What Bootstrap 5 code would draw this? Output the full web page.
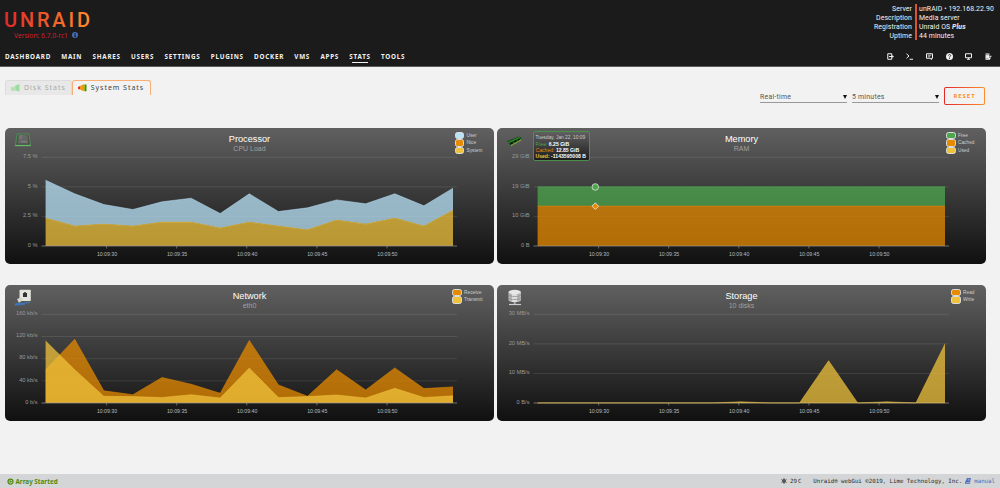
<!DOCTYPE html>
<html lang="en">
<head>
    <meta charset="UTF-8">
    <meta name="viewport" content="width=device-width, initial-scale=1.0">
    <title>Unraid - Stats</title>
    <link href="https://cdn.jsdelivr.net/npm/bootstrap@5.3.0/dist/css/bootstrap.min.css" rel="stylesheet">
    <style>
        body {
            background: #f2f2f2;
            font-family: "Noto Sans", sans-serif;
            font-size: 7px;
            line-height: 9px;
            color: #1c1b1b;
            height: 488px;
            overflow: hidden;
        }
        svg { display: block; overflow: visible; }

        /* header */
        .top-bar {
            background: #1c1b1b;
            color: #f2f2f2;
            height: 67px;
            border-bottom: 1px solid #5c5c5c;
        }
        .brand { width: 90px; padding: 9px 0 0 4px; }
        .brand-version { color: #d11f27; font-size: 6.7px; padding-left: 10px; margin-top: 1.5px; }
        .server-info { font-family: Roboto, sans-serif; font-size: 6.9px; letter-spacing: .1px; padding-top: 4px; height: 41px; }
        .server-info div div { position: relative; top: .6px; }
        .info-labels { padding-right: 3px; }
        .info-values { border-left: 2px solid #d9532c; padding-left: 2px; width: 85px; height: 36px; }
        .main-menu { padding: 0 8px 0 5px; height: 12px; margin-top: 9px; }
        .main-menu a {
            color: #f2f2f2;
            font-size: 6.3px;
            font-weight: 700;
            letter-spacing: .75px;
            margin-right: 10.3px;
            position: relative;
        }
        .main-menu a.current::after {
            content: "";
            position: absolute;
            left: 3px;
            right: 3px;
            bottom: -2px;
            height: 1px;
            background: #f2f2f2;
        }
        .tool-icons { gap: 12.7px; }
        .tool-icons svg { width: 7px; height: 7px; }

        /* tabs and selectors */
        .tab-row { height: 61px; padding: 13px 15px 0 5px; }
        .stat-tab {
            height: 14.5px;
            border: 1px solid #dcdcdc;
            border-bottom: 0;
            border-radius: 3px 3px 0 0;
            background: #e8e8e8;
            color: #a8a8a8;
            font-size: 7px;
            letter-spacing: .97px;
            padding: 0 5px;
        }
        .stat-tab.current { background: #f2f2f2; border-color: #f9ae74; color: #444; padding-right: 6px; }
        .stat-tab svg { width: 9px; height: 8px; margin-right: 4px; }
        .picker {
            font-family: Roboto, sans-serif;
            font-size: 6.9px;
            letter-spacing: .25px;
            color: #555;
            width: 87px;
            height: 13.5px;
            border-bottom: 1px solid #999;
            margin-right: 5px;
            margin-top: 9.5px;
            padding-top: 2.5px;
        }
        .picker i {
            border: 2px solid transparent;
            border-top: 4px solid #111;
            border-bottom: 0;
        }
        .reset-btn {
            width: 41px;
            height: 18px;
            margin-top: 7px;
            border: 0;
            border-radius: 2px;
            background: linear-gradient(90deg, #e22828, #ff8c2f);
            padding: 1.3px;
        }
        .reset-btn span {
            display: block;
            height: 100%;
            line-height: 17px;
            border-radius: 1px;
            background: #f2f2f2;
            color: #ff8c2f;
            font-size: 5.9px;
            font-weight: 700;
            letter-spacing: 1px;
        }

        /* charts */
        .chart-grid {
            display: grid;
            grid-template-columns: 489px 489px;
            column-gap: 3px;
            row-gap: 21px;
            padding-left: 5px;
            font-family: "Liberation Sans", sans-serif;
        }
        .chart-box {
            height: 136px;
            border-radius: 5px;
            background: linear-gradient(#606060, #101010);
            position: relative;
        }
        .chart-head { height: 24px; padding-right: 11.5px; }
        .chart-icon { width: 60px; padding: 4px 0 0 9px; }
        .chart-icon svg { width: 18px; height: 18px; }
        .chart-name { color: #fff; font-size: 9.2px; line-height: 10px; padding-top: 5.5px; }
        .chart-sub { color: #a0a0a0; font-size: 7px; line-height: 9px; }
        .chart-keys { width: 48.5px; padding-top: 4.4px; font-size: 4.8px; line-height: 7.1px; color: #ccc; }
        .key-list span { display: flex; align-items: center; }
        .key-list i {
            flex-shrink: 0;
            width: 9.6px;
            height: 7.1px;
            border: 1px solid #ddd;
            border-radius: 2.5px;
            margin-right: 2px;
        }
        .point-tip {
            position: absolute;
            left: 36px;
            top: 3px;
            width: 56.5px;
            height: 30px;
            border: 1px solid #4a8f4a;
            border-radius: 2px;
            background: linear-gradient(rgba(96, 96, 96, .8), rgba(16, 16, 16, .8));
            color: #fff;
            font-size: 5.1px;
            line-height: 6.25px;
            padding: 2.5px 1.5px;
            white-space: nowrap;
        }
        .tip-date { color: #ccc; font-size: 4.8px; }

        /* footer */
        .status-bar {
            position: absolute;
            left: 0;
            right: 0;
            bottom: 0;
            height: 14px;
            background: #d4d5d6;
            color: #2b2a29;
            padding: 0 5px 0 7px;
        }
        .array-state { color: #4f8a10; font-weight: 700; font-size: 6.3px; }
        .copyright { font-family: "DejaVu Sans Mono", monospace; font-size: 5.75px; }
        .copyright a { color: #486dba; }
    </style>
</head>
<body>

<header class="top-bar">
    <div class="d-flex justify-content-between">
        <div class="brand">
            <svg width="86" height="20">
                <defs>
                    <linearGradient id="brandFill" gradientUnits="userSpaceOnUse" x1="0" y1="0" x2="86" y2="0">
                        <stop offset="0" stop-color="#e22828"/>
                        <stop offset="1" stop-color="#ff8c2f"/>
                    </linearGradient>
                </defs>
                <text x="0" y="17.5" font-family="Roboto, sans-serif" font-size="20" font-weight="500" textLength="86" fill="url(#brandFill)">UNRAID</text>
            </svg>
            <div class="brand-version d-flex align-items-center text-nowrap">
                Version: 6.7.0-rc1
                <svg class="ms-1" width="6" height="6" viewBox="0 0 12 12"><circle cx="6" cy="6" r="6" fill="#486dba"/><path d="M5 2h2.4v2H5zM4 5h3.4v4H8.4v1.2H4V9h1V6.2H4z" fill="#1c1b1b"/></svg>
            </div>
        </div>
        <div class="server-info d-flex text-nowrap">
            <div class="info-labels text-end">
                <div>Server</div>
                <div>Description</div>
                <div>Registration</div>
                <div>Uptime</div>
            </div>
            <div class="info-values">
                <div>unRAID &bull; 192.168.22.90</div>
                <div>Media server</div>
                <div>Unraid OS <b><em>Plus</em></b></div>
                <div>44 minutes</div>
            </div>
        </div>
    </div>
    <nav class="main-menu d-flex align-items-center">
        <a class="text-decoration-none">DASHBOARD</a>
        <a class="text-decoration-none">MAIN</a>
        <a class="text-decoration-none">SHARES</a>
        <a class="text-decoration-none">USERS</a>
        <a class="text-decoration-none">SETTINGS</a>
        <a class="text-decoration-none">PLUGINS</a>
        <a class="text-decoration-none">DOCKER</a>
        <a class="text-decoration-none">VMS</a>
        <a class="text-decoration-none">APPS</a>
        <a class="text-decoration-none current">STATS</a>
        <a class="text-decoration-none">TOOLS</a>
        <div class="tool-icons d-flex ms-auto">
            <svg viewBox="0 0 14 14" fill="none" stroke="#f2f2f2" stroke-width="2"><path d="M9.500 4V1.500H1.500v11h8V10M4 7h7"/><path d="M8.500 3L14 7 8.500 11z" fill="#f2f2f2" stroke="none"/></svg>
            <svg viewBox="0 0 14 14" fill="none" stroke="#f2f2f2" stroke-width="2"><path d="M1 1.500L6 6l-5 4.500M7 12.500h7"/></svg>
            <svg viewBox="0 0 14 14" fill="none" stroke="#f2f2f2"><path d="M1 1.500h12v9h-2v2.500l-3-2.500H1z" stroke-width="2"/><path d="M3.500 4.500h7M3.500 7.500h5" stroke-width="1.500"/></svg>
            <svg viewBox="0 0 14 14"><circle cx="7" cy="7" r="7" fill="#f2f2f2"/><path d="M4.800 5.300c0-3 4.600-2.800 4.600-.2C9.400 6.600 7 6.500 7 8.500" fill="none" stroke="#1c1b1b" stroke-width="1.700"/><path d="M6 9.700h2v2H6z" fill="#1c1b1b"/></svg>
            <svg viewBox="0 0 14 14" fill="none" stroke="#f2f2f2" stroke-width="2"><path d="M1 1.500h12v8H1zM4 12.500h6M7 10v2"/></svg>
            <svg viewBox="0 0 14 14" fill="#f2f2f2"><path d="M1 1h8v2.500H1zM1 4h7v1.500h5v2H8V9h4v2h-2v2.500H1z"/><path d="M1 3.700h6M1 10.700h6" stroke="#1c1b1b" stroke-width=".6"/></svg>
        </div>
    </nav>
</header>

<main>
    <div class="tab-row d-flex align-items-start">
        <div class="stat-tab d-flex align-items-center text-nowrap">
            <svg viewBox="0 0 18 16"><path d="M0 5l4 2 5-4v10l-9 1z" fill="#b4e0b4"/><path d="M9 3l8-3v15l-8-2z" fill="#9bdca0"/></svg>
            Disk Stats
        </div>
        <div class="stat-tab current d-flex align-items-center text-nowrap">
            <svg viewBox="0 0 18 16"><path d="M0 6l4-2v7l-4-1z" fill="#e0342b"/><path d="M4 4l6-3v13l-6-3z" fill="#f39a1e"/><path d="M10 1h4v14l-4-2z" fill="#9aba20"/><path d="M14 1h3v13l-3 1z" fill="#3f8f1c"/></svg>
            System Stats
        </div>
        <div class="picker d-flex justify-content-between align-items-center ms-auto"><span>Real-time</span><i></i></div>
        <div class="picker d-flex justify-content-between align-items-center"><span>5 minutes</span><i></i></div>
        <button type="button" class="reset-btn"><span>RESET</span></button>
    </div>

    <div class="chart-grid">
        <section class="chart-box">
            <div class="chart-head d-flex justify-content-between">
                <div class="chart-icon">
                    <svg viewBox="0 0 18 18"><path d="M3 2h12l1.500 11.500h-15z" fill="#4a4f4a" stroke="#4f9e50" stroke-width=".8"/><path d="M4.500 3h9l.8 8.500H3.700z" fill="#666"/><path d="M5 4h4M5 6h3" stroke="#999" stroke-width=".5"/><path d="M7 9.800h6" stroke="#aaa" stroke-width=".5"/><path d="M1.300 13.500h15.400" stroke="#69b96b" stroke-width="1.300"/></svg>
                </div>
                <div class="text-center"><div class="chart-name">Processor</div><div class="chart-sub">CPU Load</div></div>
                <div class="chart-keys d-flex justify-content-end"><div class="key-list"></div></div>
            </div>
            <svg class="plot" data-chart="cpu" width="489" height="112"></svg>
        </section>

        <section class="chart-box">
            <div class="chart-head d-flex justify-content-between">
                <div class="chart-icon">
                    <svg viewBox="0 0 18 18"><path d="M1 9l12-4.500 3 1.500-11 8z" fill="#174d17"/><path d="M2.500 10.500L14 5.500M5 13l10-5.500" stroke="#2f8f2a" stroke-width="1.200"/><path d="M4 11l2.500-1 .5 1.500-2 1zM8 9l2-1 .8 1.500-2 1zM11.500 7.500l2-1 .5 1-2 1.200z" fill="#111"/><path d="M5 13.700l10-5.500" stroke="#c9c545" stroke-width=".8" stroke-dasharray="1 .5"/></svg>
                </div>
                <div class="text-center"><div class="chart-name">Memory</div><div class="chart-sub">RAM</div></div>
                <div class="chart-keys d-flex justify-content-end"><div class="key-list"></div></div>
            </div>
            <svg class="plot" data-chart="ram" width="489" height="112"></svg>
            <div class="point-tip">
                <div class="tip-date">Tuesday, Jan 22, 10:09</div>
                <div><span style="color: #4da74d">Free:</span> <b>6.25 GiB</b></div>
                <div><span style="color: #e68a00">Cached:</span> <b>12.85 GiB</b></div>
                <div><b><span style="color: #efc23c">Used:</span> -1143595008 B</b></div>
            </div>
        </section>

        <section class="chart-box">
            <div class="chart-head d-flex justify-content-between">
                <div class="chart-icon">
                    <svg viewBox="0 0 18 18"><rect x="5.500" y=".8" width="11.300" height="11.200" rx=".8" fill="#e4e4de"/><path d="M9 4h4v4H9z" fill="#333"/><path d="M10 3.300h2v1h-2z" fill="#333"/><path d="M3 10l4-1.500 2 2.500-4 3z" fill="#d5d5cf"/><path d="M1 15.500c4-3 5 0 9-1.300s4 .3 6-1M1 16c3-1 6 .5 10-1" fill="none" stroke="#3c78bd" stroke-width="1.100"/></svg>
                </div>
                <div class="text-center"><div class="chart-name">Network</div><div class="chart-sub">eth0</div></div>
                <div class="chart-keys d-flex justify-content-end"><div class="key-list"></div></div>
            </div>
            <svg class="plot" data-chart="net" width="489" height="112"></svg>
        </section>

        <section class="chart-box">
            <div class="chart-head d-flex justify-content-between">
                <div class="chart-icon">
                    <svg viewBox="0 0 18 18"><path d="M2.500 3v8c0 3 12.500 3 12.500 0V3z" fill="#b5b5b5"/><path d="M6 4h5v9H6z" fill="#ddd"/><ellipse cx="8.700" cy="3" rx="6.200" ry="2.200" fill="#e6e6e6"/><path d="M2.500 6c1 2 11.500 2 12.500 0M2.500 9c1 2 11.500 2 12.500 0" fill="none" stroke="#888" stroke-width=".7"/><path d="M8.700 13v2" stroke="#aaa" stroke-width="2"/><path d="M3 15.500h12" stroke="#ccc" stroke-width="1.200"/></svg>
                </div>
                <div class="text-center"><div class="chart-name">Storage</div><div class="chart-sub">10 disks</div></div>
                <div class="chart-keys d-flex justify-content-end"><div class="key-list"></div></div>
            </div>
            <svg class="plot" data-chart="disk" width="489" height="112"></svg>
        </section>
    </div>
</main>

<footer class="status-bar d-flex justify-content-between align-items-center">
    <div class="array-state d-flex align-items-center">
        <svg width="7" height="7" viewBox="0 0 14 14"><circle cx="7" cy="7" r="5" fill="none" stroke="#4f8a10" stroke-width="2.500"/><path d="M5 3.800L10.500 7 5 10.200z" fill="#4f8a10"/></svg>
        <span style="margin-left: 1.5px">Array Started</span>
    </div>
    <div class="copyright d-flex align-items-center text-nowrap">
        <svg width="6" height="6" viewBox="0 0 12 12" fill="none" stroke="#444" stroke-width="1.600"><path d="M6 0v12M.8 3l10.400 6M.8 9l10.400-6"/><circle cx="6" cy="6" r="3"/></svg>
        <span style="margin-left: 3px">29</span>
        <span style="margin-left: 1px">C</span>
        <span style="margin-left: 12px">Unraid&reg; webGui &copy;2019, Lime Technology, Inc.</span>
        <a class="d-flex align-items-center text-decoration-none" style="margin-left: 3px"><svg width="6" height="6" viewBox="0 0 12 12"><path d="M4 0h8L9.500 9H2.500c-1 0-1 1.500 0 1.500H10L12 3v1l-2 8H2c-2 0-2.500-1.500-2-3z" fill="#486dba"/><path d="M5.500 2.500h4M5 4.500h4" stroke="#d4d5d6"/></svg><span style="margin-left: 3px">manual</span></a>
    </div>
</footer>

<script src="https://cdn.jsdelivr.net/npm/bootstrap@5.3.0/dist/js/bootstrap.bundle.min.js"></script>
<script>
    // plot area inside each svg
    const LEFT = 40.6, STEP = 29.1, TOP = 5.3, BASE = 94;
    const BLUE = '#b9e3f8', ORANGE = '#e68a00', YELLOW = '#efc23c', GREEN = '#4da74d';
    const times = ['10:09:30', '10:09:35', '10:09:40', '10:09:45', '10:09:50'];

    const cpuSystem = [2.36, 1.69, 1.85, 1.69, 2.02, 2.02, 1.52, 2.02, 1.69, 1.38, 2.19, 1.85, 2.36, 1.69, 3.03];
    const cached = Array(15).fill(13.03);
    const zero = Array(15).fill(0);

    const charts = {
        cpu: {
            max: 7.5,
            labels: ['0 %', '2.5 %', '5 %', '7.5 %'],
            keys: [['User', BLUE], ['Nice', ORANGE], ['System', YELLOW]],
            areas: [
                { color: BLUE, from: cpuSystem, to: [5.56, 4.41, 3.51, 3.09, 3.74, 4.04, 2.75, 4.41, 2.92, 3.23, 3.9, 3.57, 4.41, 3.4, 4.89] },
                { color: YELLOW, from: zero, to: cpuSystem }
            ]
        },
        ram: {
            max: 29,
            labels: ['0 B', '10 GiB', '19 GiB', '29 GiB'],
            keys: [['Free', GREEN], ['Cached', ORANGE], ['Used', YELLOW]],
            areas: [
                { color: GREEN, from: cached, to: Array(15).fill(19.4) },
                { color: ORANGE, from: zero, to: cached }
            ]
        },
        net: {
            max: 160,
            labels: ['0 b/s', '40 kb/s', '80 kb/s', '120 kb/s', '160 kb/s'],
            keys: [['Receive', ORANGE], ['Transmit', YELLOW]],
            areas: [
                { color: ORANGE, from: zero, to: [60, 115, 22, 15, 46, 34, 17.5, 113, 32.6, 12, 60, 23.5, 63.4, 26, 29] },
                { color: YELLOW, from: zero, to: [112, 60, 12, 11.5, 10, 15, 9, 63, 9.7, 11.5, 14.5, 9, 26.5, 10, 13] }
            ]
        },
        disk: {
            max: 30,
            labels: ['0 B/s', '10 MB/s', '20 MB/s', '30 MB/s'],
            keys: [['Read', ORANGE], ['Write', YELLOW]],
            areas: [
                { color: YELLOW, from: zero, to: [0, 0, 0, 0, 0, 0, 0, 0.4, 0, 0, 14.3, 0, 0.4, 0, 20] }
            ]
        }
    };

    document.querySelectorAll('.plot').forEach(svg => {
        const chart = charts[svg.dataset.chart];
        const y = v => BASE - v / chart.max * (BASE - TOP);
        const points = values => values.map((v, i) => (LEFT + i * STEP).toFixed(1) + ',' + y(v).toFixed(1));
        let out = '';

        chart.labels.forEach((label, i) => {
            const ly = BASE - i * (BASE - TOP) / (chart.labels.length - 1);
            if (i > 0) out += `<path d="M36.500 ${ly}H452" stroke="#fff" stroke-opacity=".1"/>`;
            out += `<text x="32.500" y="${ly + .8}" text-anchor="end" font-size="5.700" fill="#999">${label}</text>`;
        });
        chart.areas.forEach(area => {
            out += `<polygon points="${points(area.to).concat(points(area.from).reverse()).join(' ')}" fill="${area.color}" fill-opacity=".75"/>`;
            out += `<polyline points="${points(area.to).join(' ')}" fill="none" stroke="${area.color}" stroke-width=".7" stroke-opacity=".7"/>`;
        });
        out += `<path d="M36.500 ${BASE}H452" stroke="#999" stroke-width=".7"/>`;
        if (svg.dataset.chart === 'disk') {
            out += `<path d="M${LEFT} ${BASE - .2}H448" stroke="${YELLOW}" stroke-width=".7" stroke-opacity=".7"/>`;
        }
        times.forEach((t, i) => {
            const tx = 101.6 + i * 70.1;
            out += `<path d="M${tx} ${BASE}v2.500" stroke="#999" stroke-width=".6"/>`;
            out += `<text x="${tx + .4}" y="104.400" text-anchor="middle" font-size="5.200" fill="#bbb">${t}</text>`;
        });
        if (svg.dataset.chart === 'ram') {
            // markers of the hovered point
            out += `<circle cx="98.300" cy="${y(19.3)}" r="3.300" fill="#4da74d" stroke="#ddd" stroke-width=".8"/>`;
            out += `<path d="M98.300 ${y(13.03) - 3.3}l3.300 3.300-3.300 3.300-3.300-3.300z" fill="#e68a00" stroke="#eee" stroke-width=".8"/>`;
        }
        svg.innerHTML = out;

        svg.parentElement.querySelector('.key-list').innerHTML =
            chart.keys.map(([name, color]) => `<span><i style="background: ${color}"></i>${name}</span>`).join('');
    });
</script>
</body>
</html>
